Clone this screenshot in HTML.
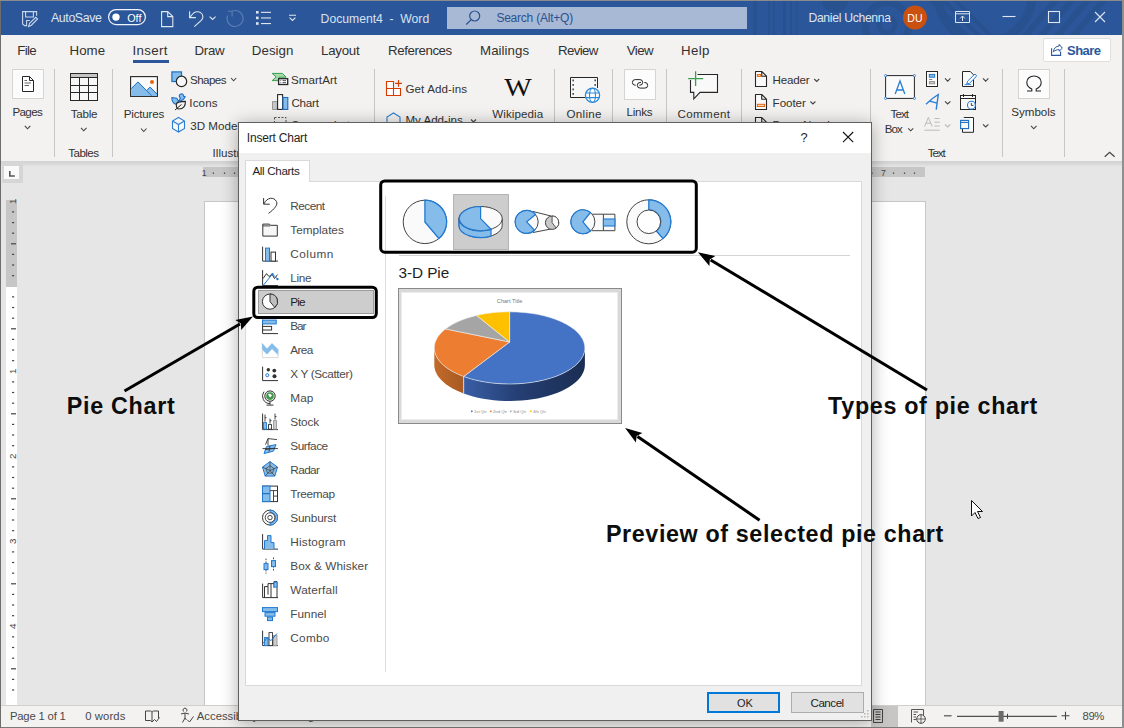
<!DOCTYPE html>
<html><head><meta charset="utf-8"><style>*{margin:0;padding:0;box-sizing:border-box}
html,body{width:1124px;height:728px;overflow:hidden;background:#e6e6e6;font-family:"Liberation Sans",sans-serif;position:relative}
.a{position:absolute}
.t{position:absolute;white-space:pre;line-height:1}
svg{position:absolute;overflow:visible}
</style></head><body>
<div class="a" style="left:0;top:0;width:1124px;height:35px;background:#2b579a;overflow:hidden">
<svg style="left:0;top:0" width="1124" height="35">
 <g fill="#28518f">
  <rect x="753" y="0" width="4" height="35"/><rect x="768" y="0" width="2" height="35"/><rect x="773" y="0" width="2" height="35"/>
  <rect x="783" y="0" width="3" height="35"/><rect x="790" y="0" width="2" height="35"/><rect x="796" y="0" width="1.5" height="35"/>
  <circle cx="835.4" cy="-1" r="13.5"/>
 </g>
 <g fill="none" stroke="#28518f">
  <circle cx="887" cy="25" r="22" stroke-width="7"/>
  <circle cx="887" cy="25" r="8" stroke-width="5"/>
  <circle cx="985" cy="-5" r="47" stroke-width="9"/>
 </g>
 <g fill="#28518f">
  <path d="M928 0 L934 0 L969 35 L963 35Z"/><path d="M940 0 L946 0 L981 35 L975 35Z"/><path d="M952 0 L958 0 L993 35 L987 35Z"/>
  <path d="M1052 0 L1060 0 L1030 35 L1022 35Z"/><path d="M1068 0 L1076 0 L1046 35 L1038 35Z"/><path d="M1084 0 L1092 0 L1062 35 L1054 35Z"/><path d="M1100 0 L1108 0 L1078 35 L1070 35Z"/>
 </g>
 <g fill="none" stroke="#c9d5ea" stroke-width="1.1">
  <path d="M36.6 15.8 V11.6 H22.6 V24 L24.6 25.6 H26.6 V20.5 H29.8"/>
  <path d="M25.6 11.6 V17 H33.4 V11.6"/>
  <path d="M28.6 26.4 L29.6 23.4 L35.8 17.3 L37.5 19 L31.4 25.2 Z"/>
 </g>
 <rect x="108.6" y="9.6" width="36.8" height="15" rx="7.5" fill="none" stroke="#f2f5fa" stroke-width="1.2"/>
 <circle cx="116" cy="17.1" r="3.7" fill="#fff"/>
 <path d="M161.6 11.6 H167.7 L172.8 16.6 V26.6 H161.6 Z M167.7 11.6 V16.6 H172.8" fill="none" stroke="#dfe6f0" stroke-width="1.1"/>
 <path d="M189.6 11.3 V17.6 H195.9 M189.9 17.3 L192.6 14 C194.6 11.6 198.2 11 200.6 12.6 C203.6 14.6 203.6 18.2 201 20.6 L194.3 26.6" fill="none" stroke="#dfe6f0" stroke-width="1.1"/>
 <path d="M209.6 16.6 L212.6 19.4 L215.6 16.6" fill="none" stroke="#dfe6f0" stroke-width="1.1"/>
 <path d="M231.5 11.3 A8 8 0 1 1 227.6 15.5 M232.1 11.3 V16.4 M232.1 11.3 H228" fill="none" stroke="#5a7db5" stroke-width="1.1"/>
 <g fill="#dfe6f0"><rect x="256" y="11" width="2.6" height="2.6"/><rect x="256" y="16.6" width="2.6" height="2.6"/><rect x="256" y="22.2" width="2.6" height="2.6"/>
 <rect x="261" y="11.8" width="10" height="1.1"/><rect x="261" y="17.4" width="10" height="1.1"/><rect x="261" y="23" width="10" height="1.1"/></g>
 <path d="M289 15.3 H296 M289.6 17.6 L292.5 20.4 L295.4 17.6" fill="none" stroke="#dfe6f0" stroke-width="1.1"/>
 <rect x="447" y="7" width="300" height="22" fill="#a7b9d5"/>
 <circle cx="474.7" cy="16" r="5" fill="none" stroke="#2c5191" stroke-width="1.2"/>
 <path d="M471.2 19.6 L466.3 24.5" stroke="#2c5191" stroke-width="1.3"/>
 <circle cx="915" cy="17.6" r="12" fill="#ca5010"/>
 <path d="M955.5 11.5 H969.5 V22.5 H955.5 Z M955.5 13.8 H969.5 M962.5 21 V16.2 M960.2 18.4 L962.5 16 L964.8 18.4" fill="none" stroke="#dfe6f0" stroke-width="1"/>
 <path d="M1002.5 16.5 H1015.5" stroke="#dfe6f0" stroke-width="1.1"/>
 <rect x="1048.5" y="11.5" width="11" height="11" fill="none" stroke="#dfe6f0" stroke-width="1.1"/>
 <path d="M1095 12 L1105 22 M1105 12 L1095 22" stroke="#dfe6f0" stroke-width="1.1"/>
</svg>
<div class="t" style="left:51.00px;top:12.00px;font-size:12.4px;color:#dde5f0;letter-spacing:-0.406px;">AutoSave</div>
<div class="t" style="left:127.20px;top:13.00px;font-size:10.8px;color:#ffffff;">Off</div>
<div class="t" style="left:320.60px;top:13.00px;font-size:12.2px;color:#d9e1ef;letter-spacing:-0.014px;">Document4  -  Word</div>
<div class="t" style="left:496.40px;top:12.00px;font-size:12px;color:#2c5191;letter-spacing:-0.223px;">Search (Alt+Q)</div>
<div class="t" style="left:808.40px;top:12.00px;font-size:12.2px;color:#dde5f0;letter-spacing:-0.311px;">Daniel Uchenna</div>
<div class="t" style="left:907.30px;top:13.00px;font-size:10.5px;color:#ffffff;">DU</div>
</div>
<div class="a" style="left:0;top:35px;width:1124px;height:127px;background:#f3f2f1"></div>
<div class="a" style="left:0;top:161px;width:1124px;height:1px;background:#d6d4d2"></div>
<div class="a" style="left:0;top:162px;width:1124px;height:5px;background:linear-gradient(#d2d2d2,#e6e6e6)"></div>
<div class="t" style="left:17.20px;top:44.00px;font-size:13.3px;color:#323130;letter-spacing:-0.644px;">File</div>
<div class="t" style="left:69.50px;top:44.00px;font-size:13.3px;color:#323130;letter-spacing:0.042px;">Home</div>
<div class="t" style="left:132.50px;top:44.00px;font-size:13.3px;color:#323130;letter-spacing:0.328px;">Insert</div>
<div class="t" style="left:194.50px;top:44.00px;font-size:13.3px;color:#323130;letter-spacing:-0.309px;">Draw</div>
<div class="t" style="left:251.80px;top:44.00px;font-size:13.3px;color:#323130;letter-spacing:0.041px;">Design</div>
<div class="t" style="left:321.00px;top:44.00px;font-size:13.3px;color:#323130;letter-spacing:-0.246px;">Layout</div>
<div class="t" style="left:388.00px;top:44.00px;font-size:13.3px;color:#323130;letter-spacing:-0.417px;">References</div>
<div class="t" style="left:480.00px;top:44.00px;font-size:13.3px;color:#323130;letter-spacing:0.054px;">Mailings</div>
<div class="t" style="left:558.00px;top:44.00px;font-size:13.3px;color:#323130;letter-spacing:-0.659px;">Review</div>
<div class="t" style="left:626.80px;top:44.00px;font-size:13.3px;color:#323130;letter-spacing:-0.593px;">View</div>
<div class="t" style="left:681.00px;top:44.00px;font-size:13.3px;color:#323130;letter-spacing:0.349px;">Help</div>
<div class="a" style="left:133px;top:60px;width:36px;height:3px;background:#2b579a"></div>
<div class="a" style="left:1043px;top:38px;width:68px;height:24px;background:#fff;border:1px solid #e1dfdd;border-radius:2px"></div>
<svg style="left:0;top:0" width="1124" height="728">
 <path d="M1051.6 48.2 V55.4 H1060.6 V51.4" fill="none" stroke="#2b579a" stroke-width="1.1"/>
 <path d="M1053.4 51.8 C1053.8 48.2 1056 46.2 1059.2 46 V44.4 L1062.3 48.2 L1059.2 51.2 V49.6 C1057 49.6 1055 50.4 1053.4 51.8 Z" fill="none" stroke="#2b579a" stroke-width="1" stroke-linejoin="round"/>
</svg>
<div class="t" style="left:1067.00px;top:44.00px;font-size:13px;color:#2b579a;font-weight:bold;letter-spacing:-0.525px;">Share</div>
<div class="a" style="left:54.0px;top:69px;width:1px;height:88px;background:#c8c6c4"></div>
<div class="a" style="left:112.1px;top:69px;width:1px;height:88px;background:#c8c6c4"></div>
<div class="a" style="left:374.0px;top:69px;width:1px;height:88px;background:#c8c6c4"></div>
<div class="a" style="left:553.9px;top:69px;width:1px;height:88px;background:#c8c6c4"></div>
<div class="a" style="left:612.0px;top:69px;width:1px;height:88px;background:#c8c6c4"></div>
<div class="a" style="left:666.1px;top:69px;width:1px;height:88px;background:#c8c6c4"></div>
<div class="a" style="left:741.3px;top:69px;width:1px;height:88px;background:#c8c6c4"></div>
<div class="a" style="left:870.0px;top:69px;width:1px;height:88px;background:#c8c6c4"></div>
<div class="a" style="left:1002.1px;top:69px;width:1px;height:88px;background:#c8c6c4"></div>
<div class="a" style="left:1064.0px;top:69px;width:1px;height:88px;background:#c8c6c4"></div>
<div class="a" style="left:12.4px;top:69.3px;width:31.4px;height:30.2px;background:#fcfcfc;border:1px solid #d6d4d2"></div>
<div class="t" style="left:12.40px;top:106.00px;font-size:11.6px;color:#323130;letter-spacing:-0.619px;">Pages</div>
<div class="t" style="left:70.70px;top:108.00px;font-size:11.6px;color:#323130;letter-spacing:-0.242px;">Table</div>
<div class="t" style="left:68.30px;top:147.00px;font-size:11.6px;color:#323130;letter-spacing:-0.563px;">Tables</div>
<div class="t" style="left:123.70px;top:108.00px;font-size:11.6px;color:#323130;letter-spacing:-0.169px;">Pictures</div>
<div class="t" style="left:190.00px;top:74.00px;font-size:11.6px;color:#323130;letter-spacing:-0.565px;">Shapes</div>
<div class="t" style="left:189.30px;top:97.00px;font-size:11.6px;color:#323130;letter-spacing:0.147px;">Icons</div>
<div class="t" style="left:190.30px;top:120.00px;font-size:11.6px;color:#323130;">3D Models</div>
<div class="t" style="left:212.60px;top:147.00px;font-size:11.6px;color:#323130;">Illustrations</div>
<div class="t" style="left:291.00px;top:74.00px;font-size:11.6px;color:#323130;letter-spacing:0.041px;">SmartArt</div>
<div class="t" style="left:291.40px;top:97.00px;font-size:11.6px;color:#323130;letter-spacing:-0.207px;">Chart</div>
<div class="t" style="left:291.40px;top:119.00px;font-size:11.6px;color:#323130;">Screenshot</div>
<div class="t" style="left:405.40px;top:83.00px;font-size:11.6px;color:#323130;letter-spacing:0.118px;">Get Add-ins</div>
<div class="t" style="left:405.40px;top:114.00px;font-size:11.6px;color:#323130;">My Add-ins</div>
<div class="t" style="left:492.20px;top:108.00px;font-size:11.6px;color:#323130;letter-spacing:0.086px;">Wikipedia</div>
<div class="t" style="left:566.50px;top:108.00px;font-size:11.6px;color:#323130;letter-spacing:0.287px;">Online</div>
<div class="a" style="left:624.3px;top:69px;width:31.7px;height:30.5px;background:#fcfcfc;border:1px solid #d6d4d2"></div>
<div class="t" style="left:626.50px;top:106.00px;font-size:11.6px;color:#323130;letter-spacing:-0.267px;">Links</div>
<div class="t" style="left:677.50px;top:108.00px;font-size:11.6px;color:#323130;letter-spacing:0.378px;">Comment</div>
<div class="t" style="left:772.60px;top:74.00px;font-size:11.6px;color:#323130;letter-spacing:-0.213px;">Header</div>
<div class="t" style="left:772.60px;top:97.00px;font-size:11.6px;color:#323130;letter-spacing:-0.049px;">Footer</div>
<div class="t" style="left:772.60px;top:119.00px;font-size:11.6px;color:#323130;">Page Number</div>
<div class="t" style="left:890.60px;top:108.00px;font-size:11.6px;color:#323130;letter-spacing:-0.947px;">Text</div>
<div class="t" style="left:884.70px;top:123.00px;font-size:11.6px;color:#323130;letter-spacing:-0.940px;">Box</div>
<div class="t" style="left:927.70px;top:147.00px;font-size:11.6px;color:#323130;letter-spacing:-1.080px;">Text</div>
<div class="a" style="left:1018.3px;top:69.4px;width:31.4px;height:30.1px;background:#fcfcfc;border:1px solid #d6d4d2"></div>
<div class="t" style="left:1011.30px;top:106.00px;font-size:11.6px;color:#323130;letter-spacing:-0.027px;">Symbols</div>
<svg style="left:0;top:0" width="1124" height="728">
 <!-- pages icon -->
 <path d="M22.5 76.5 H29.5 L33.5 80.5 V91.5 H22.5 Z M29.5 76.5 V80.5 H33.5" fill="#fff" stroke="#262626" stroke-width="1"/>
 <path d="M24.5 80.5 H27 M24.5 83 H31 M24.5 85.5 H29" stroke="#555" stroke-width="0.9"/>
 <path d="M24.8 125.8 L27.55 128.8 L30.3 125.8" fill="none" stroke="#444" stroke-width="1.1"/>
 <!-- table icon -->
 <rect x="70.5" y="73.5" width="27" height="27" fill="#f7f7f7" stroke="#262626" stroke-width="1"/>
 <rect x="71" y="74" width="26" height="3" fill="#c4c4c4"/>
 <path d="M70.5 77.5 H97.5 M70.5 85.5 H97.5 M70.5 92.5 H97.5 M79.5 77.5 V100.5 M88.5 77.5 V100.5" stroke="#262626" stroke-width="1"/>
 <path d="M81 127.8 L83.75 130.8 L86.5 127.8" fill="none" stroke="#444" stroke-width="1.1"/>
 <!-- pictures -->
 <rect x="130.6" y="76.6" width="26.8" height="19.8" fill="#fafafa" stroke="#262626" stroke-width="1.1"/>
 <path d="M131.2 88.6 L138 81.9 L151.6 96 H131.2 Z" fill="#86bcea"/>
 <path d="M146.8 90.3 L150 87.1 L157 94 V96 H151.6 Z" fill="#86bcea"/>
 <path d="M131.2 88.6 L138 81.9 L151.6 95.8 M146.8 90.3 L150 87.1 L157 94" fill="none" stroke="#1b6ec2" stroke-width="1"/>
 <circle cx="152" cy="82" r="2" fill="#e3650f"/>
 <path d="M141 128.5 L143.75 131.5 L146.5 128.5" fill="none" stroke="#444" stroke-width="1.1"/>
 <!-- shapes -->
 <rect x="171.9" y="71.9" width="9.6" height="9.6" fill="#86bcea" stroke="#1b6ec2" stroke-width="1.2"/>
 <circle cx="181.5" cy="81.4" r="5.2" fill="#f7f7f7" stroke="#262626" stroke-width="1.2"/>
 <path d="M231 78 L233.6 80.8 L236.2 78" fill="none" stroke="#444" stroke-width="1.1"/>
 <!-- icons -->
 <path d="M171.8 97.5 C171.8 101.5 173 103.6 176 104.2 L178.6 101.2 L180.5 98.3 C178.8 97 178.8 94.5 180.8 94 C182.6 93.5 183.6 94.6 183.8 96.4 L185.3 96.8 L183.4 99.4 C182 100.6 180 101 178.6 101.2 L176.8 98.2 Z" fill="#86bcea" stroke="#1b6ec2" stroke-width="1.1" stroke-linejoin="round"/>
 <path d="M176.3 104.5 C176.3 102.3 180 101.4 185.4 101.4 C185.6 106 183.4 109 179 109 C177.4 109 176.3 107 176.3 104.5 Z" fill="#f3f2f1" stroke="#262626" stroke-width="1.1"/>
 <path d="M175 110 L181.5 104.5" stroke="#262626" stroke-width="1"/>
 <!-- 3d models -->
 <path d="M178.5 117.5 L184.5 121 V128.5 L178.5 132 L172.5 128.5 V121 Z M172.5 121 L178.5 124.5 L184.5 121 M178.5 124.5 V132" fill="#fafafa" stroke="#2a7fd4" stroke-width="1.1"/>
 <!-- smartart -->
 <path d="M272.2 73.4 H282.4 L286.2 77.2 H279 V80.6 H272.2 L276.2 77 Z" fill="#a8dcae" stroke="#34a04c" stroke-width="1" stroke-linejoin="round"/>
 <rect x="278.6" y="78.7" width="9.1" height="5.8" fill="#fff" stroke="#262626" stroke-width="1.3"/>
 <path d="M280.4 80.6 H281.2 M282.6 80.6 H286 M280.4 82.6 H281.2 M282.6 82.6 H286" stroke="#444" stroke-width="0.9"/>
 <!-- chart -->
 <rect x="272.6" y="101.6" width="4.6" height="7.8" fill="#c8c8c8" stroke="#8a8a8a" stroke-width="0.9"/>
 <rect x="277.6" y="94.6" width="5" height="14.8" fill="#fff" stroke="#262626" stroke-width="1.1"/>
 <rect x="283" y="97.5" width="4.8" height="11.9" fill="#86bcea" stroke="#1b6ec2" stroke-width="1.1"/>
 <!-- screenshot (cut) -->
 <path d="M274.5 117.5 H286 V122 M274.5 117.5 V122" fill="none" stroke="#555" stroke-width="1" stroke-dasharray="2 1.5"/>
 <!-- get add-ins -->
 <path d="M386.5 81.5 H393.5 V95.5 H386.5 Z M386.5 88.5 H400.5 V95.5 H393.5" fill="#fff" stroke="#d83b01" stroke-width="1.1"/>
 <path d="M398.5 80 V86.8 M395.1 83.4 H401.9" stroke="#d83b01" stroke-width="1.1"/>
 <!-- my add-ins (cut) -->
 <path d="M387 125 V117 L393.5 113 L400 117 V125" fill="none" stroke="#2a7fd4" stroke-width="1.1"/>
 <path d="M471 119.5 L473.5 122.0 L476 119.5" fill="none" stroke="#444" stroke-width="1.1"/>
 <!-- online video -->
 <rect x="570.5" y="77.5" width="27" height="20" fill="#f7f7f7"/><path d="M570.5 77.5 H597.5 V88 M570.5 77.5 V97.5 H585" fill="none" stroke="#262626" stroke-width="1"/>
 <g fill="#262626"><rect x="572.5" y="79.5" width="1.3" height="1.8"/><rect x="572.5" y="84" width="1.3" height="1.8"/><rect x="572.5" y="88.5" width="1.3" height="1.8"/><rect x="572.5" y="93" width="1.3" height="1.8"/><rect x="594.5" y="79.5" width="1.3" height="1.8"/><rect x="594.5" y="84" width="1.3" height="1.8"/></g>
 <circle cx="592.5" cy="95.3" r="7.1" fill="#fff" stroke="#2b88d8" stroke-width="1.3"/>
 <ellipse cx="592.5" cy="95.3" rx="3" ry="7.1" fill="none" stroke="#2b88d8" stroke-width="1.1"/>
 <path d="M585.5 93 H599.5 M585.5 97.6 H599.5" stroke="#2b88d8" stroke-width="1.1"/>
 <!-- links -->
 <path d="M635.8 85.2 H635.2 A2.8 2.8 0 0 1 635.2 79.6 H639.9 A2.8 2.8 0 0 1 639.9 85.2 H639.3 M641 82.5 H640.1 A2.8 2.8 0 0 0 640.1 88.1 H644.9 A2.8 2.8 0 0 0 644.9 82.5 H644.3" fill="none" stroke="#262626" stroke-width="1"/>
 <!-- comment -->
 <path d="M690.5 80.1 V92.4 H693.8 V98.8 L700 92.4 H717.5 V74.5 H697.5" fill="#f9f9f9" stroke="#262626" stroke-width="1.1"/>
 <path d="M695.6 71.3 V86 M688.2 78.7 H703.2" stroke="#36a04c" stroke-width="1.3"/>
 <!-- header -->
 <path d="M755.5 71.5 H761.7 L766.5 76.2 V86.5 H755.5 Z M761.7 71.5 V76.2 H766.5" fill="#fafafa" stroke="#262626" stroke-width="1.1" stroke-linejoin="round"/>
 <rect x="757.4" y="74.6" width="3.4" height="1.8" fill="#fbd9b8" stroke="#e3650f" stroke-width="1"/>
 <path d="M814.2 79 L816.7 81.5 L819.2 79" fill="none" stroke="#444" stroke-width="1.1"/>
 <path d="M755.5 94.5 H761.7 L766.5 99.2 V109.5 H755.5 Z M761.7 94.5 V99.2 H766.5" fill="#fafafa" stroke="#262626" stroke-width="1.1" stroke-linejoin="round"/>
 <rect x="757.4" y="104.3" width="7.2" height="2.2" fill="#fbd9b8" stroke="#e3650f" stroke-width="1"/>
 <path d="M810.4 101.5 L812.9 104.0 L815.4 101.5" fill="none" stroke="#444" stroke-width="1.1"/>
 <path d="M755.5 125 V117.5 H761.7 L766.5 122.2 V125 M761.7 117.5 V122.2 H766.5" fill="#fafafa" stroke="#262626" stroke-width="1.1"/>
 <!-- text box -->
 <rect x="885.6" y="75.6" width="28.8" height="22.8" fill="#fafafa" stroke="#262626" stroke-width="1"/>
 <g fill="#fff" stroke="#2a7fd4" stroke-width="0.9"><circle cx="885.6" cy="75.6" r="1.1"/><circle cx="914.4" cy="75.6" r="1.1"/><circle cx="885.6" cy="98.4" r="1.1"/><circle cx="914.4" cy="98.4" r="1.1"/></g>
 <path d="M895.2 94 L900 81 L904.8 94 M896.6 90 H903.4" fill="none" stroke="#2a7fd4" stroke-width="1.3"/>
 <path d="M908.2 128.3 L910.7 130.8 L913.2 128.3" fill="none" stroke="#444" stroke-width="1.1"/>
 <!-- quick parts -->
 <rect x="926.5" y="71.5" width="11" height="15" fill="#fafafa" stroke="#262626" stroke-width="1"/>
 <rect x="929.3" y="74.4" width="5.4" height="2.8" fill="#86bcea" stroke="#1b6ec2" stroke-width="0.9"/>
 <path d="M929.2 79.5 H932.2" stroke="#666" stroke-width="0.8"/>
 <rect x="929.3" y="81.6" width="5.4" height="2.2" fill="#c8c8c8" stroke="#888" stroke-width="0.8"/>
 <path d="M945 78.4 L947.7 81.10000000000001 L950.4 78.4" fill="none" stroke="#444" stroke-width="1.1"/>
 <!-- wordart -->
 <path d="M926 104.2 C930 100.5 934 97 938.3 94.5 L936.2 109.7 M929.8 101.2 L937 103.2" fill="none" stroke="#2a7fd4" stroke-width="1.4"/>
 <path d="M945 101.3 L947.7 104.0 L950.4 101.3" fill="none" stroke="#444" stroke-width="1.1"/>
 <!-- drop cap -->
 <path d="M924.6 126.6 L928.4 117.4 L932.2 126.6 M926 123.2 H930.8 M934.4 118.5 H939.7 M934.4 122.2 H939.7 M934.4 126 H939.7 M924.3 130.2 H939.7" fill="none" stroke="#b4b4b4" stroke-width="0.9"/>
 <path d="M945 124.3 L947.7 127.0 L950.4 124.3" fill="none" stroke="#b8b8b8" stroke-width="1.1"/>
 <!-- signature -->
 <path d="M962.5 71.5 H970.3 L973.5 74.8 V86.5 H962.5 Z" fill="#fafafa" stroke="#262626" stroke-width="1"/>
 <path d="M966.8 84 L967.6 81.2 L974 74.8 A1.4 1.4 0 0 1 976 76.8 L969.6 83.2 Z" fill="#fff" stroke="#2a7fd4" stroke-width="1"/>
 <path d="M964.6 84.6 H971.2" stroke="#2a7fd4" stroke-width="0.9"/>
 <path d="M983 78.4 L985.7 81.10000000000001 L988.4 78.4" fill="none" stroke="#444" stroke-width="1.1"/>
 <!-- date time -->
 <rect x="960.5" y="95.5" width="15" height="14" fill="#fafafa" stroke="#262626" stroke-width="1"/>
 <path d="M960.5 98.5 H975.5 M963.5 94 V97 M972.5 94 V97" stroke="#262626" stroke-width="1"/>
 <circle cx="971.4" cy="105.2" r="3.9" fill="#fff" stroke="#2a7fd4" stroke-width="1.1"/>
 <path d="M971.3 102.9 V105.4 H973.4" fill="none" stroke="#262626" stroke-width="0.9"/>
 <!-- object -->
 <path d="M963.8 117.5 H973.5 V132.3 H962.5 V128.5" fill="#fafafa" stroke="#262626" stroke-width="1"/>
 <rect x="960.6" y="120.4" width="8" height="8.2" fill="#fafafa" stroke="#1b6ec2" stroke-width="1.1"/>
 <path d="M960.6 122.4 H968.6" stroke="#1b6ec2" stroke-width="1.1"/>
 <path d="M983 124.3 L985.7 127.0 L988.4 124.3" fill="none" stroke="#444" stroke-width="1.1"/>
 <!-- omega -->
 <path d="M1027 91 H1031.8 V89 C1028.5 87.5 1026.8 85 1026.8 82.2 C1026.8 78.5 1030 76 1034 76 C1038 76 1041.2 78.5 1041.2 82.2 C1041.2 85 1039.5 87.5 1036.2 89 V91 H1041" fill="none" stroke="#262626" stroke-width="1.1"/>
 <path d="M1031 125.8 L1033.75 128.8 L1036.5 125.8" fill="none" stroke="#444" stroke-width="1.1"/>
 <path d="M1104.7 156.8 L1109.65 152.20000000000002 L1114.6000000000001 156.8" fill="none" stroke="#444" stroke-width="1.2"/>
 <!-- W -->
 <text x="518" y="95.5" font-family="Liberation Serif" font-size="25" text-anchor="middle" fill="#111" textLength="27.5" lengthAdjust="spacingAndGlyphs">W</text>
</svg>
<div class="a" style="left:204px;top:201px;width:722px;height:510px;background:#fff;border:1px solid #c6c6c6"></div>
<div class="a" style="left:2px;top:162px;width:20.7px;height:20.9px;background:#d6d6d6"></div>
<div class="a" style="left:4.1px;top:165.6px;width:15.3px;height:13.6px;background:#fafafa"></div>
<svg style="left:0;top:0" width="30" height="200"><path d="M9.8 171 V176 H14.8" fill="none" stroke="#555" stroke-width="1.6"/></svg>
<div class="a" style="left:203px;top:167px;width:40px;height:10px;background:#c6c6c6"></div>
<div class="a" style="left:860px;top:167px;width:65px;height:10px;background:#c6c6c6"></div>
<svg style="left:0;top:0" width="1124" height="728"><rect x="212.8" y="172.5" width="1.2" height="1.4" fill="#444"/><rect x="223.9" y="172.5" width="1.2" height="1.4" fill="#444"/><rect x="233.9" y="172.5" width="1.2" height="1.4" fill="#444"/><rect x="871.4" y="172.5" width="1.2" height="1.4" fill="#444"/><rect x="892.9" y="172.5" width="1.2" height="1.4" fill="#444"/><rect x="903.9" y="172.5" width="1.2" height="1.4" fill="#444"/><rect x="913.9" y="172.5" width="1.2" height="1.4" fill="#444"/></svg>
<div class="t" style="left:201.80px;top:169.00px;font-size:8.7px;color:#444;">1</div>
<div class="t" style="left:881.00px;top:169.00px;font-size:8.7px;color:#444;">7</div>
<div class="a" style="left:6px;top:199.8px;width:11px;height:87px;background:#c6c6c6"></div>
<div class="a" style="left:6px;top:286.8px;width:11px;height:418.3px;background:#fff"></div>
<svg style="left:0;top:0" width="1124" height="728"><rect x="12" y="211.3" width="2.2" height="1.2" fill="#444"/><rect x="12" y="222.0" width="2.2" height="1.2" fill="#444"/><rect x="12" y="232.6" width="2.2" height="1.2" fill="#444"/><rect x="11" y="243.2" width="5" height="1.2" fill="#444"/><rect x="12" y="253.8" width="2.2" height="1.2" fill="#444"/><rect x="12" y="264.4" width="2.2" height="1.2" fill="#444"/><rect x="12" y="275.1" width="2.2" height="1.2" fill="#444"/><rect x="12" y="296.3" width="2.2" height="1.2" fill="#444"/><rect x="12" y="306.9" width="2.2" height="1.2" fill="#444"/><rect x="12" y="317.6" width="2.2" height="1.2" fill="#444"/><rect x="11" y="328.2" width="5" height="1.2" fill="#444"/><rect x="12" y="338.8" width="2.2" height="1.2" fill="#444"/><rect x="12" y="349.4" width="2.2" height="1.2" fill="#444"/><rect x="12" y="360.1" width="2.2" height="1.2" fill="#444"/><rect x="12" y="381.3" width="2.2" height="1.2" fill="#444"/><rect x="12" y="391.9" width="2.2" height="1.2" fill="#444"/><rect x="12" y="402.6" width="2.2" height="1.2" fill="#444"/><rect x="11" y="413.2" width="5" height="1.2" fill="#444"/><rect x="12" y="423.8" width="2.2" height="1.2" fill="#444"/><rect x="12" y="434.4" width="2.2" height="1.2" fill="#444"/><rect x="12" y="445.1" width="2.2" height="1.2" fill="#444"/><rect x="12" y="466.3" width="2.2" height="1.2" fill="#444"/><rect x="12" y="476.9" width="2.2" height="1.2" fill="#444"/><rect x="12" y="487.6" width="2.2" height="1.2" fill="#444"/><rect x="11" y="498.2" width="5" height="1.2" fill="#444"/><rect x="12" y="508.8" width="2.2" height="1.2" fill="#444"/><rect x="12" y="519.4" width="2.2" height="1.2" fill="#444"/><rect x="12" y="530.1" width="2.2" height="1.2" fill="#444"/><rect x="12" y="551.3" width="2.2" height="1.2" fill="#444"/><rect x="12" y="561.9" width="2.2" height="1.2" fill="#444"/><rect x="12" y="572.6" width="2.2" height="1.2" fill="#444"/><rect x="11" y="583.2" width="5" height="1.2" fill="#444"/><rect x="12" y="593.8" width="2.2" height="1.2" fill="#444"/><rect x="12" y="604.4" width="2.2" height="1.2" fill="#444"/><rect x="12" y="615.1" width="2.2" height="1.2" fill="#444"/><rect x="12" y="636.3" width="2.2" height="1.2" fill="#444"/><rect x="12" y="646.9" width="2.2" height="1.2" fill="#444"/><rect x="12" y="657.6" width="2.2" height="1.2" fill="#444"/><rect x="11" y="668.2" width="5" height="1.2" fill="#444"/><rect x="12" y="678.8" width="2.2" height="1.2" fill="#444"/><rect x="12" y="689.4" width="2.2" height="1.2" fill="#444"/><text x="0" y="0" transform="translate(16.2 201.3) rotate(-90)" dy="0" font-family="Liberation Sans" font-size="9.8" text-anchor="middle" fill="#444">1</text><text x="0" y="0" transform="translate(16.2 371.3) rotate(-90)" dy="0" font-family="Liberation Sans" font-size="9.8" text-anchor="middle" fill="#444">1</text><text x="0" y="0" transform="translate(16.2 456.3) rotate(-90)" dy="0" font-family="Liberation Sans" font-size="9.8" text-anchor="middle" fill="#444">2</text><text x="0" y="0" transform="translate(16.2 541.3) rotate(-90)" dy="0" font-family="Liberation Sans" font-size="9.8" text-anchor="middle" fill="#444">3</text><text x="0" y="0" transform="translate(16.2 626.3) rotate(-90)" dy="0" font-family="Liberation Sans" font-size="9.8" text-anchor="middle" fill="#444">4</text></svg>
<div class="a" style="left:0;top:705px;width:1124px;height:1px;background:#cfcfcf"></div>
<div class="a" style="left:0;top:706px;width:1124px;height:21px;background:#f3f2f1"></div>
<div class="a" style="left:0;top:727px;width:1124px;height:1px;background:#7a7a7a"></div>
<div class="a" style="left:871px;top:706px;width:26.5px;height:21px;background:#c8c6c4"></div>
<div class="t" style="left:9.90px;top:711.00px;font-size:11.3px;color:#4a4a4a;letter-spacing:-0.180px;">Page 1 of 1</div>
<div class="t" style="left:85.20px;top:711.00px;font-size:11.3px;color:#4a4a4a;letter-spacing:0.099px;">0 words</div>
<div class="t" style="left:196.80px;top:711.00px;font-size:11.3px;color:#4a4a4a;">Accessibility: Good to go</div>
<div class="t" style="left:1082.60px;top:711.00px;font-size:11.3px;color:#4a4a4a;letter-spacing:-0.483px;">89%</div>
<svg style="left:0;top:0" width="1124" height="728">
 <path d="M145.5 711 H150.5 C151.5 711 152 711.5 152 712.5 V721.5 M152 712.5 C152 711.5 152.5 711 153.5 711 H158.5 V718 M145.5 711 V720.5 H150.5 L152 722 M152 722 L154.5 719.5 L156.5 721.5 L159.5 717.5" fill="none" stroke="#444" stroke-width="1"/>
 <path d="M183.5 711.5 A2 2 0 1 1 186.5 711.5 M181 714 L185 713 L189 714 M185 713 V718 L182.5 722.5 M185 718 L186.5 720 M187.5 720 L189.5 722 L193.5 716.5" fill="none" stroke="#444" stroke-width="1"/>
 <path d="M873.5 709.5 H882.5 V722.5 H873.5 Z M875.5 712 H880.5 M875.5 714.5 H880.5 M875.5 717 H880.5 M875.5 719.5 H880.5" fill="none" stroke="#333" stroke-width="0.9"/>
 <path d="M911.5 722.5 V709.5 H923.5 V715 M913.5 712 H918 M913.5 714.5 H916 M913.5 717 H916 M913.5 719.5 H916" fill="none" stroke="#444" stroke-width="0.9"/>
 <circle cx="921" cy="719" r="4.3" fill="#f3f2f1" stroke="#444" stroke-width="1"/>
 <path d="M916.7 719 H925.3 M921 714.7 V723.3" stroke="#444" stroke-width="0.8"/>
 <path d="M944 715.8 H951.6" stroke="#444" stroke-width="1.1"/>
 <path d="M957 716.4 H1056.8" stroke="#505050" stroke-width="1.3"/>
 <rect x="998.6" y="711" width="5" height="10.7" fill="#6b6b6b"/>
 <path d="M1007.5 713.8 V718.8" stroke="#444" stroke-width="1"/>
 <path d="M1061.5 715.8 H1069.5 M1065.5 711.8 V719.8" stroke="#444" stroke-width="1.1"/>
</svg>
<div class="a" style="left:0;top:0;width:1px;height:728px;background:#6d6d6d;z-index:60"></div>
<div class="a" style="left:1122px;top:0;width:2px;height:728px;background:#8f8f8f;z-index:60"></div>
<div class="a" style="left:0;top:0;width:1124px;height:1px;background:#8c8c8c;z-index:60"></div>
<div class="a" style="left:238px;top:122px;width:634px;height:599px;background:#f0f0f0;border:1px solid #5f5f5f;box-shadow:0 2px 16px rgba(0,0,0,0.32)"></div>
<div class="a" style="left:239px;top:123px;width:632px;height:29.6px;background:#fff"></div>
<div class="t" style="left:246.80px;top:132.00px;font-size:12px;color:#1e1e1e;letter-spacing:-0.205px;">Insert Chart</div>
<div class="t" style="left:800.40px;top:132.00px;font-size:12.8px;color:#1e1e1e;">?</div>
<svg style="left:0;top:0" width="1124" height="728"><path d="M843 132 L853.2 142.2 M853.2 132 L843 142.2" stroke="#111" stroke-width="1.1"/></svg>
<div class="a" style="left:245.4px;top:181.3px;width:617px;height:505px;background:#fff;border:1px solid #d9d9d9"></div>
<div class="a" style="left:245.4px;top:160.4px;width:65px;height:21.9px;background:#fff;border:1px solid #d9d9d9;border-bottom:none"></div>
<div class="t" style="left:252.40px;top:165.00px;font-size:11.6px;color:#1e1e1e;letter-spacing:-0.317px;">All Charts</div>
<div class="a" style="left:385px;top:196px;width:1px;height:476px;background:#dcdcdc"></div>
<div class="a" style="left:399px;top:255px;width:451px;height:1px;background:#d4d4d4"></div>
<div class="a" style="left:257.7px;top:289.7px;width:116.8px;height:24.4px;background:#cdcdcd;border:1px solid #9c9c9c"></div>
<div class="t" style="left:290.30px;top:201.00px;font-size:11.8px;color:#4a4a4a;letter-spacing:-0.520px;">Recent</div>
<div class="t" style="left:290.30px;top:225.00px;font-size:11.8px;color:#4a4a4a;letter-spacing:-0.033px;">Templates</div>
<div class="t" style="left:290.30px;top:249.00px;font-size:11.8px;color:#4a4a4a;letter-spacing:0.462px;">Column</div>
<div class="t" style="left:290.30px;top:273.00px;font-size:11.8px;color:#4a4a4a;letter-spacing:-0.314px;">Line</div>
<div class="t" style="left:290.30px;top:297.00px;font-size:11.8px;color:#1e1e1e;letter-spacing:-0.895px;">Pie</div>
<div class="t" style="left:290.30px;top:321.00px;font-size:11.8px;color:#4a4a4a;letter-spacing:-1.165px;">Bar</div>
<div class="t" style="left:290.30px;top:345.00px;font-size:11.8px;color:#4a4a4a;letter-spacing:-0.619px;">Area</div>
<div class="t" style="left:290.30px;top:369.00px;font-size:11.8px;color:#4a4a4a;letter-spacing:-0.374px;">X Y (Scatter)</div>
<div class="t" style="left:290.30px;top:393.00px;font-size:11.8px;color:#4a4a4a;letter-spacing:0.056px;">Map</div>
<div class="t" style="left:290.30px;top:417.00px;font-size:11.8px;color:#4a4a4a;letter-spacing:-0.176px;">Stock</div>
<div class="t" style="left:290.30px;top:441.00px;font-size:11.8px;color:#4a4a4a;letter-spacing:-0.466px;">Surface</div>
<div class="t" style="left:290.30px;top:465.00px;font-size:11.8px;color:#4a4a4a;letter-spacing:-0.625px;">Radar</div>
<div class="t" style="left:290.30px;top:489.00px;font-size:11.8px;color:#4a4a4a;letter-spacing:-0.318px;">Treemap</div>
<div class="t" style="left:290.30px;top:513.00px;font-size:11.8px;color:#4a4a4a;letter-spacing:-0.177px;">Sunburst</div>
<div class="t" style="left:290.30px;top:537.00px;font-size:11.8px;color:#4a4a4a;letter-spacing:0.184px;">Histogram</div>
<div class="t" style="left:290.30px;top:561.00px;font-size:11.8px;color:#4a4a4a;letter-spacing:0.040px;">Box &amp; Whisker</div>
<div class="t" style="left:290.30px;top:585.00px;font-size:11.8px;color:#4a4a4a;letter-spacing:0.152px;">Waterfall</div>
<div class="t" style="left:290.30px;top:609.00px;font-size:11.8px;color:#4a4a4a;letter-spacing:0.010px;">Funnel</div>
<div class="t" style="left:290.30px;top:633.00px;font-size:11.8px;color:#4a4a4a;letter-spacing:0.258px;">Combo</div>
<svg style="left:0;top:0" width="1124" height="728"><path d="M263.6 198.1 V204.2 H269.8" fill="none" stroke="#333" stroke-width="1"/><path d="M264 203.79999999999998 C267 197.1 274 196.6 276.5 201.6 C278 204.6 275 208.6 268.5 213.4" fill="none" stroke="#333" stroke-width="1"/><path d="M262.8 224.1 H269.5 L270.5 225.29999999999998 H277.3 V236.1 H262.8 Z" fill="#f7f7f7" stroke="#333" stroke-width="1"/><path d="M262.8 225.9 H270.2" stroke="#333" stroke-width="0.9"/><path d="M262.6 246.6 V261.1 H278" fill="none" stroke="#333" stroke-width="1"/><rect x="265.5" y="248.1" width="4" height="13" fill="#86bcea" stroke="#1f78d1" stroke-width="1"/><rect x="271" y="252.1" width="4.5" height="9" fill="#fff" stroke="#333" stroke-width="1"/><path d="M262.6 270.1 V285.6 H278" fill="none" stroke="#333" stroke-width="1"/><path d="M263 278.6 L266.5 273.6 L269 276.6 L272 274.1 L274.5 278.6 L277.5 274.6" fill="none" stroke="#333" stroke-width="1"/><path d="M263 285.6 L272.5 274.1 L277.5 279.1" fill="none" stroke="#1f78d1" stroke-width="1"/><circle cx="272.5" cy="274.1" r="1.2" fill="#1f78d1"/><circle cx="277.5" cy="279.1" r="1.2" fill="#1f78d1"/><circle cx="270" cy="301.6" r="7.6" fill="#fff" stroke="#333" stroke-width="1"/><path d="M270 294.0 A7.6 7.6 0 0 1 274.8 307.5 L270 301.6 Z" fill="#bfbfbf" stroke="#333" stroke-width="1"/><path d="M262.6 319.6 V333.6 H278" fill="none" stroke="#333" stroke-width="1"/><rect x="262.6" y="320.1" width="13.6" height="3.8" fill="#86bcea" stroke="#1f78d1" stroke-width="1"/><rect x="262.6" y="326.40000000000003" width="9" height="3.6" fill="#fff" stroke="#333" stroke-width="1"/><path d="M262.3 343.6 L267 349.1 L272 343.6 L278 349.6 V354.6 L272 348.6 L267 354.1 L262.3 349.6 Z" fill="#86bcea" stroke="#86bcea" stroke-width="0.8"/><path d="M262.3 357.6 H278 V352.6" fill="none" stroke="#d9d9d9" stroke-width="1"/><path d="M262.3 349.6 V357.6" stroke="#d9d9d9" stroke-width="1"/><path d="M262.6 366.6 V380.6 H278" fill="none" stroke="#333" stroke-width="1"/><circle cx="268.3" cy="369.8" r="1.7" fill="#333"/><circle cx="274.3" cy="370.6" r="1.9" fill="#333"/><circle cx="267.3" cy="375.20000000000005" r="1.5" fill="none" stroke="#1f78d1" stroke-width="1"/><circle cx="274.5" cy="376.20000000000005" r="2" fill="#333"/><circle cx="270" cy="396.1" r="5.2" fill="#e8e8e8" stroke="#333" stroke-width="1"/><circle cx="270" cy="396.1" r="3.8" fill="#3e9a4a"/><path d="M268 394.6 L270 393.6 L272 395.6 L270 397.6 Z" fill="#fff"/><path d="M264 391.6 A7.5 7.5 0 0 0 270 403.6 M270 401.6 V404.6 M266.5 405.1 H273.5" fill="none" stroke="#333" stroke-width="1"/><path d="M262.6 413.6 V429.6 H278" fill="none" stroke="#333" stroke-width="1"/><rect x="263.5" y="422.6" width="3" height="6.5" fill="#86bcea" stroke="#1f78d1" stroke-width="0.9"/><rect x="268.5" y="424.6" width="3" height="4.5" fill="#fff" stroke="#333" stroke-width="0.9"/><rect x="273.5" y="420.6" width="3" height="8.5" fill="#ccc" stroke="#999" stroke-width="0.9"/><path d="M265 414.6 V421.6 M270 418.6 V423.6 M275 413.6 V419.6 M265 417.6 H266.5 M270 420.6 H271.5 M275 416.6 H276.5" stroke="#333" stroke-width="0.9"/><path d="M264 453.6 L266.5 446.6 L276 444.6 L273.5 451.1 Z" fill="#86bcea" stroke="#1f78d1" stroke-width="1"/><path d="M270 445.6 L269 451.6 M265 449.6 L275 448.1 M265.5 444.6 L268 438.6 L277 439.6 M268 438.6 V445.6 M262.5 448.6 H278" fill="none" stroke="#333" stroke-width="0.9"/><path d="M270 461.6 L277.5 467.1 L274.8 476.1 H265.2 L262.5 467.1 Z" fill="#86bcea" stroke="#1f78d1" stroke-width="1"/><path d="M270 465.6 L274 468.6 L272.5 473.1 H267.5 L266 468.6 Z M270 461.6 V470.6 M262.5 467.1 L270 470.6 L277.5 467.1 M265.2 476.1 L270 470.6 L274.8 476.1" fill="none" stroke="#444" stroke-width="0.8"/><rect x="262.5" y="486.1" width="15" height="15.5" fill="#fff" stroke="#333" stroke-width="1"/><rect x="262.5" y="486.1" width="7.5" height="15.5" fill="#86bcea" stroke="#1f78d1" stroke-width="1"/><path d="M262.5 493.6 H270 M270 490.6 H277.5 M273.5 490.6 V501.6 M273.5 496.1 H277.5" stroke="#333" stroke-width="0.9"/><path d="M262.5 493.6 H270" stroke="#1f78d1" stroke-width="1"/><circle cx="270" cy="517.6" r="7.5" fill="#fff" stroke="#333" stroke-width="1"/><path d="M270 510.1 A7.5 7.5 0 0 1 270 525.1 V523.1 A5.5 5.5 0 0 0 270 512.1 Z" fill="#86bcea" stroke="#1f78d1" stroke-width="0.9"/><circle cx="270" cy="517.6" r="4.8" fill="none" stroke="#333" stroke-width="0.9"/><circle cx="270" cy="517.6" r="2.2" fill="none" stroke="#333" stroke-width="0.9"/><path d="M262.6 534.1 V549.1 H278" fill="none" stroke="#333" stroke-width="1"/><path d="M264.5 549.1 V540.6 H267.5 V535.6 H271 V542.6 H274 V549.1" fill="#86bcea" stroke="#1f78d1" stroke-width="1"/><path d="M266 558.6 V573.6 M273.5 557.6 V571.6" stroke="#333" stroke-width="0.9" stroke-dasharray="1.6 1.2"/><rect x="264" y="563.6" width="4" height="6" fill="#86bcea" stroke="#1f78d1" stroke-width="1"/><rect x="271.5" y="560.6" width="4" height="6" fill="#86bcea" stroke="#1f78d1" stroke-width="1"/><path d="M262.6 583.6 V597.6 H278" fill="none" stroke="#333" stroke-width="1"/><path d="M264.5 597.6 V586.6 H268 V594.6 M268 586.6 V583.6 H271 V597.6 M271 583.6 H274 V581.6 H277 V597.6 M274 583.6 V587.6" fill="none" stroke="#333" stroke-width="1"/><rect x="274" y="582.1" width="3" height="5" fill="#86bcea" stroke="#1f78d1" stroke-width="0.9"/><rect x="262.5" y="607.6" width="15" height="4" fill="#86bcea" stroke="#1f78d1" stroke-width="1"/><rect x="265" y="612.6" width="10" height="3.6" fill="#86bcea" stroke="#1f78d1" stroke-width="1"/><rect x="267.5" y="617.1" width="5" height="3.5" fill="#86bcea" stroke="#1f78d1" stroke-width="1"/><path d="M262.6 630.6 V645.6 H278" fill="none" stroke="#333" stroke-width="1"/><rect x="264.5" y="637.6" width="3.5" height="8" fill="#86bcea" stroke="#1f78d1" stroke-width="0.9"/><rect x="269" y="632.6" width="3.5" height="13" fill="#fff" stroke="#333" stroke-width="0.9"/><rect x="273.5" y="635.6" width="3.5" height="10" fill="#ccc" stroke="#999" stroke-width="0.9"/><path d="M263 643.6 L267 637.6 L271 640.6 L277 633.6" fill="none" stroke="#1f78d1" stroke-width="1"/></svg>
<svg style="left:0;top:0" width="1124" height="728">
 <rect x="453.5" y="194.5" width="55" height="55" fill="#cdcdcd" stroke="#808080" stroke-width="1" stroke-dasharray="1 1"/>
 <circle cx="424.9" cy="221.9" r="21.7" fill="#fafafa" stroke="#444" stroke-width="1"/>
 <path d="M424.9 200.2 A21.7 21.7 0 0 1 438.9 238.5 L424.9 221.9 Z" fill="#86bcea" stroke="#1f78d1" stroke-width="1.3"/>
 <!-- 3d pie -->
 <path d="M459 218.6 V225.4 A21.6 12.1 0 0 0 502.2 225.4 V218.6" fill="#fafafa" stroke="#444" stroke-width="1"/>
 <path d="M459 218.6 V225.4 A21.6 12.1 0 0 0 491 236.1 V229.3 A21.6 12.1 0 0 1 459 218.6 Z" fill="#86bcea" stroke="#1f78d1" stroke-width="1.2"/>
 <ellipse cx="480.6" cy="218.6" rx="21.6" ry="12.1" fill="#fafafa" stroke="#444" stroke-width="1"/>
 <path d="M480.6 206.5 A21.6 12.1 0 1 0 491 229.3 L480.6 218.6 Z" fill="#86bcea" stroke="#1f78d1" stroke-width="1.2"/>
 <!-- pie of pie -->
 <path d="M533 211.5 L551 216 M533 232.5 L551 229" stroke="#444" stroke-width="1"/>
 <circle cx="526.7" cy="221.9" r="11.5" fill="#fafafa" stroke="#444" stroke-width="1"/>
 <path d="M535.5 214.5 L526.7 221.9 L534.5 230.3 A11.5 11.5 0 1 1 535.5 214.5 Z" fill="#86bcea" stroke="#1f78d1" stroke-width="1.2"/>
 <circle cx="552.1" cy="222.7" r="6.7" fill="#c8c8c8" stroke="#444" stroke-width="1"/>
 <path d="M552.1 216 V222.7 L556.2 228 A6.7 6.7 0 0 0 552.1 216 Z" fill="#fafafa" stroke="#444" stroke-width="0.9"/>
 <!-- bar of pie -->
 <path d="M591.7 214.2 H614.9 V230.7 H591.7 M603.4 214.2 V230.7" fill="#fafafa" stroke="#444" stroke-width="1"/>
 <circle cx="582.9" cy="221.8" r="12" fill="#fafafa" stroke="#444" stroke-width="1"/>
 <path d="M590.5 212.5 L582.9 221.8 L590.5 231 A12 12 0 1 1 590.5 212.5 Z" fill="#86bcea" stroke="#1f78d1" stroke-width="1.2"/>
 <rect x="603.4" y="219" width="11.5" height="7" fill="#86bcea" stroke="#1f78d1" stroke-width="1.1"/>
 <!-- doughnut -->
 <circle cx="648.8" cy="221.8" r="22" fill="#fafafa" stroke="#444" stroke-width="1"/>
 <path d="M648.8 199.8 A22 22 0 0 1 663 238.6 L656.4 231 A11.8 11.8 0 0 0 648.8 210 Z" fill="#86bcea" stroke="#1f78d1" stroke-width="1.3"/>
 <circle cx="648.8" cy="221.8" r="11.8" fill="#fff" stroke="#444" stroke-width="1"/>
</svg>
<div class="t" style="left:398.50px;top:265.00px;font-size:15.3px;color:#1e1e1e;letter-spacing:-0.050px;">3-D Pie</div>
<div class="a" style="left:397.5px;top:287.5px;width:224.2px;height:136.6px;background:#d9d9d9;border:1px solid #8a8a8a"></div>
<div class="a" style="left:401px;top:291.5px;width:217px;height:128.6px;background:#fff;border:1px solid #ececec"></div>
<svg style="left:0;top:0" width="1124" height="728"><defs><linearGradient id="gb" x1="0" x2="1"><stop offset="0" stop-color="#3a5ea6"/><stop offset="0.45" stop-color="#243f73"/><stop offset="1" stop-color="#1b2d52"/></linearGradient><linearGradient id="go" x1="0" x2="1"><stop offset="0" stop-color="#c26a2a"/><stop offset="1" stop-color="#a75a22"/></linearGradient></defs><path d="M584.90 347.90 L584.69 350.58 L584.07 353.24 L583.04 355.87 L581.60 358.46 L579.77 360.99 L577.55 363.45 L574.96 365.83 L572.01 368.10 L568.71 370.26 L565.09 372.30 L561.16 374.21 L556.95 375.97 L552.47 377.58 L547.76 379.02 L542.85 380.29 L537.74 381.38 L532.49 382.29 L527.10 383.01 L521.62 383.54 L516.08 383.87 L510.49 384.00 L504.91 383.93 L499.35 383.66 L493.84 383.20 L488.42 382.54 L483.12 381.69 L477.97 380.66 L472.99 379.45 L468.21 378.06 L463.66 376.50 L463.66 393.50 L468.21 395.06 L472.99 396.45 L477.97 397.66 L483.12 398.69 L488.42 399.54 L493.84 400.20 L499.35 400.66 L504.91 400.93 L510.49 401.00 L516.08 400.87 L521.62 400.54 L527.10 400.01 L532.49 399.29 L537.74 398.38 L542.85 397.29 L547.76 396.02 L552.47 394.58 L556.95 392.97 L561.16 391.21 L565.09 389.30 L568.71 387.26 L572.01 385.10 L574.96 382.83 L577.55 380.45 L579.77 377.99 L581.60 375.46 L583.04 372.87 L584.07 370.24 L584.69 367.58 L584.90 364.90Z" fill="url(#gb)"/><path d="M463.66 376.50 L461.86 375.82 L460.11 375.11 L458.40 374.37 L456.74 373.61 L455.13 372.83 L453.57 372.02 L452.06 371.19 L450.61 370.34 L449.21 369.46 L447.87 368.57 L446.58 367.66 L445.36 366.73 L444.19 365.78 L443.08 364.82 L442.04 363.84 L441.05 362.84 L440.14 361.84 L439.28 360.81 L438.49 359.78 L437.77 358.74 L437.12 357.68 L436.53 356.62 L436.01 355.55 L435.56 354.47 L435.17 353.38 L434.86 352.29 L434.61 351.20 L434.44 350.10 L434.33 349.00 L434.30 347.90 L434.30 364.90 L434.33 366.00 L434.44 367.10 L434.61 368.20 L434.86 369.29 L435.17 370.38 L435.56 371.47 L436.01 372.55 L436.53 373.62 L437.12 374.68 L437.77 375.74 L438.49 376.78 L439.28 377.81 L440.14 378.84 L441.05 379.84 L442.04 380.84 L443.08 381.82 L444.19 382.78 L445.36 383.73 L446.58 384.66 L447.87 385.57 L449.21 386.46 L450.61 387.34 L452.06 388.19 L453.57 389.02 L455.13 389.83 L456.74 390.61 L458.40 391.37 L460.11 392.11 L461.86 392.82 L463.66 393.50Z" fill="url(#go)"/><path d="M463.66 376.50 V393.50" stroke="#e8e8e8" stroke-width="0.8"/><path d="M509.6 342.0 L509.60 311.80 L516.74 311.96 L523.81 312.45 L530.76 313.25 L537.52 314.37 L544.02 315.79 L550.21 317.50 L556.04 319.48 L561.45 321.72 L566.40 324.20 L570.83 326.89 L574.71 329.76 L578.00 332.80 L580.68 335.98 L582.71 339.26 L584.09 342.63 L584.80 346.04 L584.83 349.46 L584.18 352.87 L582.86 356.24 L580.88 359.53 L578.26 362.72 L575.02 365.78 L571.19 368.67 L566.81 371.37 L561.91 373.87 L556.54 376.13 L550.74 378.13 L544.58 379.87 L538.10 381.31 L531.36 382.46 L524.43 383.29 L517.37 383.81 L510.23 384.00 L503.09 383.86 L496.01 383.41 L489.05 382.63 L482.27 381.54 L475.74 380.15 L469.52 378.46 L463.66 376.50Z" fill="#4472c4" stroke="#f2f2f2" stroke-width="0.6"/><path d="M509.6 342.0 L463.66 376.50 L461.50 375.67 L459.41 374.81 L457.38 373.91 L455.42 372.97 L453.54 372.00 L451.74 371.00 L450.01 369.97 L448.36 368.90 L446.79 367.81 L445.31 366.70 L443.92 365.55 L442.61 364.38 L441.39 363.20 L440.27 361.99 L439.24 360.76 L438.30 359.51 L437.46 358.25 L436.72 356.97 L436.07 355.68 L435.53 354.39 L435.08 353.08 L434.73 351.76 L434.49 350.44 L434.34 349.12 L434.30 347.80 L434.36 346.47 L434.52 345.15 L434.78 343.83 L435.14 342.52 L435.60 341.21 L436.16 339.92 L436.83 338.63 L437.58 337.36 L438.44 336.10 L439.39 334.85 L440.44 333.63 L441.57 332.42 L442.81 331.23 L444.13 330.07 L445.53 328.93Z" fill="#ed7d31" stroke="#f2f2f2" stroke-width="0.6"/><path d="M509.6 342.0 L445.53 328.93 L446.10 328.50 L446.67 328.07 L447.26 327.65 L447.87 327.23 L448.48 326.81 L449.10 326.40 L449.74 326.00 L450.39 325.60 L451.05 325.20 L451.73 324.80 L452.41 324.42 L453.11 324.03 L453.82 323.65 L454.53 323.28 L455.26 322.91 L456.00 322.54 L456.75 322.18 L457.51 321.83 L458.29 321.48 L459.07 321.14 L459.86 320.80 L460.66 320.46 L461.47 320.14 L462.29 319.81 L463.12 319.50 L463.96 319.19 L464.81 318.88 L465.67 318.58 L466.54 318.29 L467.41 318.00 L468.29 317.72 L469.19 317.44 L470.09 317.17 L470.99 316.91 L471.91 316.65 L472.83 316.40 L473.76 316.15 L474.70 315.91 L475.64 315.68 L476.59 315.45Z" fill="#a5a5a5" stroke="#f2f2f2" stroke-width="0.6"/><path d="M509.6 342.0 L476.59 315.45 L477.36 315.28 L478.13 315.10 L478.91 314.93 L479.69 314.77 L480.48 314.61 L481.27 314.45 L482.06 314.30 L482.86 314.15 L483.66 314.01 L484.46 313.87 L485.27 313.74 L486.08 313.61 L486.89 313.48 L487.71 313.36 L488.53 313.24 L489.35 313.13 L490.17 313.02 L491.00 312.92 L491.83 312.82 L492.66 312.73 L493.49 312.64 L494.33 312.55 L495.17 312.47 L496.01 312.39 L496.85 312.32 L497.69 312.25 L498.53 312.19 L499.38 312.13 L500.23 312.08 L501.08 312.03 L501.93 311.99 L502.78 311.95 L503.63 311.91 L504.48 311.88 L505.33 311.86 L506.18 311.84 L507.04 311.82 L507.89 311.81 L508.75 311.80 L509.60 311.80Z" fill="#ffc000" stroke="#f2f2f2" stroke-width="0.6"/><text x="509.6" y="302.5" font-family="Liberation Sans" font-size="5.6" text-anchor="middle" fill="#777">Chart Title</text><rect x="471" y="410.5" width="1.6" height="1.6" fill="#4472c4"/><text x="474" y="412.6" font-family="Liberation Sans" font-size="4.2" fill="#888">1st Qtr</text><rect x="490" y="410.5" width="1.6" height="1.6" fill="#ed7d31"/><text x="493" y="412.6" font-family="Liberation Sans" font-size="4.2" fill="#888">2nd Qtr</text><rect x="510" y="410.5" width="1.6" height="1.6" fill="#a5a5a5"/><text x="513" y="412.6" font-family="Liberation Sans" font-size="4.2" fill="#888">3rd Qtr</text><rect x="530" y="410.5" width="1.6" height="1.6" fill="#ffc000"/><text x="533" y="412.6" font-family="Liberation Sans" font-size="4.2" fill="#888">4th Qtr</text></svg>
<div class="a" style="left:707.2px;top:692.1px;width:72.5px;height:20.6px;background:#e1e1e1;border:2px solid #0078d7"></div>
<div class="a" style="left:791.3px;top:692.1px;width:72.5px;height:20.6px;background:#e1e1e1;border:1px solid #adadad"></div>
<div class="t" style="left:737.00px;top:698.00px;font-size:11px;color:#1e1e1e;">OK</div>
<div class="t" style="left:810.50px;top:697.00px;font-size:11.6px;color:#1e1e1e;letter-spacing:-0.483px;">Cancel</div>
<svg style="left:0;top:0" width="1124" height="728"><g fill="#b5b5b5"><rect x="867" y="710" width="1.5" height="1.5"/><rect x="864" y="713" width="1.5" height="1.5"/><rect x="867" y="713" width="1.5" height="1.5"/><rect x="861" y="716" width="1.5" height="1.5"/><rect x="864" y="716" width="1.5" height="1.5"/><rect x="867" y="716" width="1.5" height="1.5"/></g></svg>
<svg style="left:0;top:0;z-index:20" width="1124" height="728"><rect x="380.7" y="181" width="315.6" height="71.2" rx="4" fill="none" stroke="#000" stroke-width="3"/><rect x="253.8" y="287.2" width="122.5" height="30.3" rx="4" fill="none" stroke="#000" stroke-width="3"/><path d="M124.5 391 L240.02 324.02" stroke="#000" stroke-width="3"/><path d="M253 316.5 L241.18 330.00 L240.89 323.52 L235.41 320.05 Z" fill="#000"/><path d="M927 390 L710.66 259.93" stroke="#000" stroke-width="3"/><path d="M697.8 252.2 L715.33 256.03 L709.80 259.41 L709.41 265.89 Z" fill="#000"/><path d="M759.6 520.2 L637.48 436.57" stroke="#000" stroke-width="3"/><path d="M625.1 428.1 L642.38 432.96 L636.65 436.01 L635.88 442.45 Z" fill="#000"/><path d="M971.5 500.5 V516 L975 512.5 L978 518.5 L980.5 517.5 L977.5 511.5 H982.5 Z" fill="#fff" stroke="#111" stroke-width="1" stroke-linejoin="round"/></svg>
<div class="t" style="left:66.80px;top:395.00px;font-size:23.3px;color:#0d0d0d;font-weight:bold;letter-spacing:0.698px;z-index:21;">Pie Chart</div>
<div class="t" style="left:828.10px;top:395.00px;font-size:23.3px;color:#0d0d0d;font-weight:bold;letter-spacing:0.672px;z-index:21;">Types of pie chart</div>
<div class="t" style="left:605.90px;top:523.00px;font-size:23.3px;color:#0d0d0d;font-weight:bold;letter-spacing:0.626px;z-index:21;">Preview of selected pie chart</div>
</body></html>
